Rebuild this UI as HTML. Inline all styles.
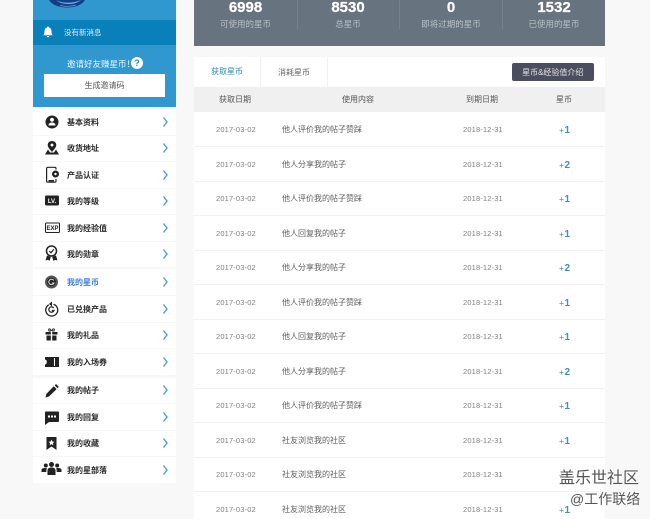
<!DOCTYPE html>
<html lang="zh">
<head>
<meta charset="utf-8">
<title>我的星币</title>
<style>
html,body{margin:0;padding:0}
body{width:650px;height:519px;overflow:hidden;background:#f8f8f8;position:relative;font-family:"Liberation Sans","Noto Sans CJK SC",sans-serif}
div,span,svg{position:absolute}
.t{white-space:nowrap;line-height:12px;height:12px;margin-top:1px}
.c{transform:translateX(-50%)}
.blue{left:33px;top:0;width:143px;height:107px;background:#3098cf}
.band{left:33px;top:20px;width:143px;height:25px;background:#0a80bb}
.btn{left:44px;top:74px;width:121px;height:23px;background:#fff;color:#555;font-size:8px;line-height:24px;text-align:center}
.g{left:33px;width:143px;background:#fff}
.m{left:67px;font-size:8px;color:#2a2a2a;font-weight:700}
.ln{left:33px;width:143px;height:1px;background:#f7f7f7}
.stats{left:193.5px;top:0;width:411px;height:46px;background:#67737e}
.n{color:#fff;font-size:15px;font-weight:700;top:0;line-height:14px;height:14px;-webkit-text-stroke:.25px #fff}
.l{color:#b8c0c7;font-size:8.5px;top:17px}
.d{top:0;width:1px;height:29px;background:#76828c}
.main{left:194px;top:57px;width:410.5px;height:462px;background:#fff}
.hd{left:194px;top:87px;width:410.5px;height:25px;background:#f0f0f0}
.th{font-size:8px;color:#555;top:93px}
.r{left:194px;width:410.5px;height:1px;background:#f1f1f1}
.dt{font-size:7.5px;color:#808080;letter-spacing:.02em}
.tx{font-size:8px;color:#5f5f5f;left:282px}
.p{font-size:10px;font-weight:700;color:#3f8fb8;left:559px}
.p i{font-style:normal;font-weight:400;font-size:8.500px;margin-right:.5px}
.wm{color:#555;white-space:nowrap;text-shadow:0 0 2px #fff,0 0 2px #fff}
</style>
</head>
<body>
<div class="blue"></div>
<svg style="left:48px;top:0" width="38" height="9" viewBox="0 0 38 9"><path d="M1 0H37C34 5 27 7.500 19 7.500C11 7.500 4 5 1 0Z" fill="#123e86"/><path d="M8 0C13 3 24 4 33 0C27 5.500 14 5.500 8 0Z" fill="#6aaee0"/><path d="M12 5.500C17 6.500 23 6.500 28 5" stroke="#8cc4ea" stroke-width=".6" fill="none"/></svg>
<div class="band"></div>
<svg style="left:43px;top:26px" width="10" height="12" viewBox="0 0 10 12"><path d="M5 0.500C5.600 .5 6 1 6 1.500C7.800 2 8.500 3.500 8.500 5.500C8.500 7.500 9 8.500 9.800 9.300H.2C1 8.500 1.500 7.500 1.500 5.500C1.500 3.500 2.200 2 4 1.500C4 1 4.400 .5 5 .5ZM3.800 10H6.200C6.200 10.800 5.700 11.300 5 11.300C4.300 11.300 3.800 10.800 3.800 10Z" fill="#fff"/></svg>
<div class="t" style="left:64px;top:26px;font-size:7.500px;color:#dbeef8">没有新消息</div>
<div class="t" style="left:67px;top:57px;font-size:8.500px;color:#eaf5fb">邀请好友赚星币！</div>
<div style="left:131px;top:57px;width:12px;height:12px;border-radius:50%;background:#fff;color:#2c8fc4;font-size:9px;font-weight:700;line-height:12px;text-align:center">?</div>
<div class="btn">生成邀请码</div>

<div class="g" style="top:109px;height:158px"></div>
<div class="g" style="top:269px;height:105.500px"></div>
<div class="g" style="top:377.500px;height:105px"></div>
<div class="ln" style="top:135px"></div><div class="ln" style="top:161px"></div><div class="ln" style="top:188px"></div><div class="ln" style="top:214px"></div><div class="ln" style="top:241px"></div>
<div class="ln" style="top:295px"></div><div class="ln" style="top:322px"></div><div class="ln" style="top:348px"></div>
<div class="ln" style="top:403px"></div><div class="ln" style="top:430px"></div><div class="ln" style="top:456px"></div>

<div class="t m" style="top:116px">基本资料</div>
<div class="t m" style="top:142px">收货地址</div>
<div class="t m" style="top:169px">产品认证</div>
<div class="t m" style="top:195px">我的等级</div>
<div class="t m" style="top:222px">我的经验值</div>
<div class="t m" style="top:248px">我的勋章</div>
<div class="t m" style="top:276px;color:#3b7ddb">我的星币</div>
<div class="t m" style="top:303px">已兑换产品</div>
<div class="t m" style="top:329px">我的礼品</div>
<div class="t m" style="top:356px">我的入场券</div>
<div class="t m" style="top:384px">我的帖子</div>
<div class="t m" style="top:411px">我的回复</div>
<div class="t m" style="top:437px">我的收藏</div>
<div class="t m" style="top:464px">我的星部落</div>

<svg style="left:40px;top:110px" width="130" height="375" viewBox="0 0 130 375">
<g fill="none" stroke="#4f9dc0" stroke-width="1.400">
<path d="M123.500 7.500L127 12L123.500 16.500"/><path d="M123.500 33.500L127 38L123.500 42.500"/><path d="M123.500 60.500L127 65L123.500 69.500"/><path d="M123.500 86.500L127 91L123.500 95.500"/><path d="M123.500 113.500L127 118L123.500 122.500"/><path d="M123.500 139.500L127 144L123.500 148.500"/><path d="M123.500 167.500L127 172L123.500 176.500"/><path d="M123.500 194.500L127 199L123.500 203.500"/><path d="M123.500 220.500L127 225L123.500 229.500"/><path d="M123.500 247.500L127 252L123.500 256.500"/><path d="M123.500 275.500L127 280L123.500 284.500"/><path d="M123.500 302.500L127 307L123.500 311.500"/><path d="M123.500 328.500L127 333L123.500 337.500"/><path d="M123.500 355.500L127 360L123.500 364.500"/>
</g>
<g fill="#222">
<!-- profile -->
<path fill-rule="evenodd" d="M12 5.500A6.500 6.500 0 1 1 11.999 5.500ZM12 7.800A2 2 0 1 0 12.001 7.800ZM8.500 15.500H15.500C15.500 13.500 14 12.500 12 12.500C10 12.500 8.500 13.500 8.500 15.500Z"/>
<!-- location -->
<path fill-rule="evenodd" d="M12 31C14.500 31 16.300 32.800 16.300 35C16.300 37.500 13.500 40 12 42C10.500 40 7.700 37.500 7.700 35C7.700 32.800 9.500 31 12 31ZM12 33.500A1.500 1.500 0 1 0 12.001 33.500Z"/>
<path d="M8 39.500L10 42.500H14L16 39.500L19 44.500H5Z"/>
<!-- device -->
<path fill="none" stroke="#222" stroke-width="1.200" d="M16 59.500V58.500C16 57.800 15.500 57.300 14.800 57.300H7.800C7.100 57.300 6.600 57.800 6.600 58.500V71C6.600 71.700 7.100 72.200 7.800 72.200H14.800C15.500 72.200 16 71.700 16 71V69"/>
<circle cx="15.500" cy="64" r="3.500"/><circle cx="15.500" cy="64" r="1.200" fill="#fff"/><rect x="8.500" y="70" width="5.500" height="1.500"/>
<!-- lv -->
<rect x="5" y="85.500" width="14" height="10" rx="1.500"/>
<!-- exp -->
<rect x="5.500" y="113" width="14" height="9.500" rx="1" fill="#fff" stroke="#222" stroke-width="1"/>
<!-- medal -->
<circle cx="11.500" cy="141" r="5" fill="none" stroke="#222" stroke-width="1.500"/><path d="M9.300 141L11 142.800L13.800 139.300" fill="none" stroke="#222" stroke-width="1.200"/>
<path d="M7 145.500L5.500 150.500L8 149.800L9.500 151L10.800 147ZM16 145.500L17.500 150.500L15 149.800L13.500 151L12.200 147Z"/>
<!-- coin -->
<circle cx="11.500" cy="172" r="6.500" fill="#555"/><circle cx="11.500" cy="172" r="4.300" fill="#222"/>
<path d="M13.800 170.500A2.700 2.700 0 1 0 14 173H11.800" fill="none" stroke="#ddd" stroke-width="1"/>
<!-- exchanged -->
<path d="M8.800 194.800A6 6 0 1 0 13.500 194.300" fill="none" stroke="#222" stroke-width="1.300"/><path d="M12 191.500V196.500L9 194Z"/>
<path d="M13.700 198A2.700 2.700 0 1 0 14 200.500H11.800" fill="none" stroke="#222" stroke-width="1.200"/>
<!-- gift -->
<path d="M5.500 222H17.500V224.500H5.500ZM6.500 225.500H16.500V230.500H6.500Z"/><path d="M9 221C8 219.500 9 218.500 10 219L11.500 221L13 219C14 218.500 15 219.500 14 221Z" fill="none" stroke="#222"/><rect x="10.800" y="221" width="1.400" height="10" fill="#fff"/>
<!-- ticket -->
<path d="M5 247H19V257H5V254.500C6.200 254.500 6.800 253.300 6.800 252C6.800 250.700 6.200 249.500 5 249.500Z"/><rect x="14" y="248" width="1" height="8" fill="#fff"/><path d="M8 247H10V249H8ZM8 255H10V257H8Z"/>
<!-- pencil -->
<path d="M16 274L18.800 276.800L17.500 278.200L14.700 275.400ZM13.800 276.300L16.600 279.100L9 286.500L5.500 287.500L6.300 284Z"/>
<!-- reply -->
<path fill-rule="evenodd" d="M6 301.500H18C18.600 301.500 19 301.900 19 302.500V311C19 311.600 18.600 312 18 312H9L5 315V302.500C5 301.900 5.400 301.500 6 301.500ZM8 305.500V307.500H10V305.500ZM11 305.500V307.500H13V305.500ZM14 305.500V307.500H16V305.500Z"/>
<!-- bookmark -->
<path fill-rule="evenodd" d="M6.500 327H16.500V340L11.500 336.500L6.500 340ZM11.500 329.500L10.600 331.500L8.500 331.700L10.100 333.100L9.600 335.200L11.500 334.100L13.400 335.200L12.900 333.100L14.500 331.700L12.400 331.500Z"/>
<!-- group -->
<circle cx="11.500" cy="354.500" r="2.500"/><circle cx="5.800" cy="355.500" r="2"/><circle cx="17.200" cy="355.500" r="2"/>
<path d="M7.500 365V360.500C7.500 358.500 9 357.500 11.500 357.500C14 357.500 15.500 358.500 15.500 360.500V365ZM1.500 362V360C1.500 358.500 3 358 5 358C6 358 6.500 358.200 7 358.500C6.500 359 6.300 359.800 6.300 361V362ZM21.500 362V360C21.500 358.500 20 358 18 358C17 358 16.500 358.200 16 358.500C16.500 359 16.700 359.800 16.700 361V362Z"/>
</g>
<text x="12" y="93" font-family="Liberation Sans,sans-serif" font-size="6" font-weight="700" fill="#fff" text-anchor="middle">LV.</text>
<text x="12.500" y="120" font-family="Liberation Sans,sans-serif" font-size="6" font-weight="700" fill="#222" text-anchor="middle">EXP</text>
</svg>

<div class="stats"></div>
<div class="d" style="left:297px"></div><div class="d" style="left:399px"></div><div class="d" style="left:502px"></div>
<div class="t n c" style="left:245.500px">6998</div>
<div class="t n c" style="left:348px">8530</div>
<div class="t n c" style="left:451px">0</div>
<div class="t n c" style="left:554px">1532</div>
<div class="t l c" style="left:245.500px">可使用的星币</div>
<div class="t l c" style="left:348px">总星币</div>
<div class="t l c" style="left:451px">即将过期的星币</div>
<div class="t l c" style="left:554px">已使用的星币</div>

<div class="main"></div>
<div style="left:260px;top:57px;width:1px;height:30px;background:#f1f1f1"></div>
<div style="left:327px;top:57px;width:1px;height:30px;background:#f1f1f1"></div>
<div class="t c" style="left:227px;top:65px;font-size:8px;color:#2b8cbe">获取星币</div>
<div class="t c" style="left:294px;top:66px;font-size:8px;color:#666">消耗星币</div>
<div style="left:512px;top:62.500px;width:81.500px;height:18.500px;background:#4b4e5e;border-radius:2px;color:#e4e4e8;font-size:8px;line-height:20px;text-align:center;white-space:nowrap">星币&amp;经验值介绍</div>

<div class="hd"></div>
<div class="t th c" style="left:235px">获取日期</div>
<div class="t th c" style="left:358px">使用内容</div>
<div class="t th c" style="left:482px">到期日期</div>
<div class="t th c" style="left:564px">星币</div>

<div class="r" style="top:146px"></div><div class="r" style="top:181px"></div><div class="r" style="top:215px"></div><div class="r" style="top:250px"></div><div class="r" style="top:284px"></div><div class="r" style="top:319px"></div><div class="r" style="top:353px"></div><div class="r" style="top:388px"></div><div class="r" style="top:422px"></div><div class="r" style="top:457px"></div><div class="r" style="top:491px"></div>

<div class="t dt" style="left:216px;top:123px">2017-03-02</div><div class="t tx" style="top:123px">他人评价我的帖子赞踩</div><div class="t dt" style="left:463px;top:123px">2018-12-31</div><div class="t p" style="top:123px"><i>+</i>1</div>
<div class="t dt" style="left:216px;top:158px">2017-03-02</div><div class="t tx" style="top:158px">他人分享我的帖子</div><div class="t dt" style="left:463px;top:158px">2018-12-31</div><div class="t p" style="top:158px"><i>+</i>2</div>
<div class="t dt" style="left:216px;top:192px">2017-03-02</div><div class="t tx" style="top:192px">他人评价我的帖子赞踩</div><div class="t dt" style="left:463px;top:192px">2018-12-31</div><div class="t p" style="top:192px"><i>+</i>1</div>
<div class="t dt" style="left:216px;top:227px">2017-03-02</div><div class="t tx" style="top:227px">他人回复我的帖子</div><div class="t dt" style="left:463px;top:227px">2018-12-31</div><div class="t p" style="top:227px"><i>+</i>1</div>
<div class="t dt" style="left:216px;top:261px">2017-03-02</div><div class="t tx" style="top:261px">他人分享我的帖子</div><div class="t dt" style="left:463px;top:261px">2018-12-31</div><div class="t p" style="top:261px"><i>+</i>2</div>
<div class="t dt" style="left:216px;top:296px">2017-03-02</div><div class="t tx" style="top:296px">他人评价我的帖子赞踩</div><div class="t dt" style="left:463px;top:296px">2018-12-31</div><div class="t p" style="top:296px"><i>+</i>1</div>
<div class="t dt" style="left:216px;top:330px">2017-03-02</div><div class="t tx" style="top:330px">他人回复我的帖子</div><div class="t dt" style="left:463px;top:330px">2018-12-31</div><div class="t p" style="top:330px"><i>+</i>1</div>
<div class="t dt" style="left:216px;top:365px">2017-03-02</div><div class="t tx" style="top:365px">他人分享我的帖子</div><div class="t dt" style="left:463px;top:365px">2018-12-31</div><div class="t p" style="top:365px"><i>+</i>2</div>
<div class="t dt" style="left:216px;top:399px">2017-03-02</div><div class="t tx" style="top:399px">他人评价我的帖子赞踩</div><div class="t dt" style="left:463px;top:399px">2018-12-31</div><div class="t p" style="top:399px"><i>+</i>1</div>
<div class="t dt" style="left:216px;top:434px">2017-03-02</div><div class="t tx" style="top:434px">社友浏览我的社区</div><div class="t dt" style="left:463px;top:434px">2018-12-31</div><div class="t p" style="top:434px"><i>+</i>1</div>
<div class="t dt" style="left:216px;top:468px">2017-03-02</div><div class="t tx" style="top:468px">社友浏览我的社区</div><div class="t dt" style="left:463px;top:468px">2018-12-31</div><div class="t p" style="top:468px"><i>+</i>1</div>
<div class="t dt" style="left:216px;top:503px">2017-03-02</div><div class="t tx" style="top:503px">社友浏览我的社区</div><div class="t dt" style="left:463px;top:503px">2018-12-31</div><div class="t p" style="top:503px"><i>+</i>1</div>

<div class="wm" style="left:559px;top:469px;font-size:16px;line-height:20px">盖乐世社区</div>
<div class="wm" style="left:570px;top:490px;font-size:14px;line-height:18px">@工作联络</div>
</body>
</html>
